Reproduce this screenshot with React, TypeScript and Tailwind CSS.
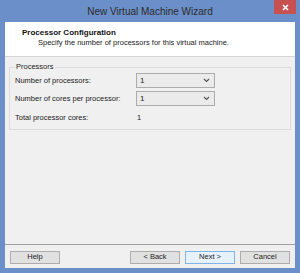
import React from "react";

const font = { fontFamily: '"Segoe UI", "Liberation Sans", Arial, sans-serif' };

function Combo({ value }: { value: string }) {
  return (
    <div className="w-[79px] h-[15px] flex items-center justify-between border border-[#acacac] bg-[#ebebeb] pl-[3px] pr-[4px]">
      <span className="text-[8px] text-[#222]">{value}</span>
      <svg width="7" height="5" viewBox="0 0 7 5">
        <path d="M1 1 L3.5 3.5 L6 1" stroke="#555" strokeWidth="1.2" fill="none" />
      </svg>
    </div>
  );
}

function Btn({ label, focused }: { label: string; focused?: boolean }) {
  return (
    <button
      className={
        "w-[50px] h-[13px] flex items-center justify-center text-[7.5px] text-[#222] border " +
        (focused ? "border-[#7eb4ea] bg-[#e5f1fb]" : "border-[#adadad] bg-[#e1e1e1]")
      }
    >
      {label}
    </button>
  );
}

export default function App() {
  return (
    <div style={font} className="w-[300px] h-[273px] bg-[#6b8fc8] flex flex-col px-[5px] pb-[5px]">
      <div className="relative h-[22px] flex items-center justify-center">
        <span className="text-[10px] text-[#2b2b2b]">New Virtual Machine Wizard</span>
        <div className="absolute right-[-1px] top-0 w-[22px] h-[14px] bg-[#c75050] flex items-center justify-center">
          <svg width="7" height="7" viewBox="0 0 7 7">
            <path d="M1 1 L6 6 M6 1 L1 6" stroke="#fff" strokeWidth="1.6" />
          </svg>
        </div>
      </div>
      <div className="flex-1 flex flex-col bg-[#f0f0f0]">
        <div className="h-[35px] bg-white border-b border-[#d5d5d5] pl-[17px] pt-[6px]">
          <div className="text-[8px] font-bold text-[#111] leading-[10px]">Processor Configuration</div>
          <div className="text-[7.5px] text-[#222] leading-[10px] pl-[16px]">
            Specify the number of processors for this virtual machine.
          </div>
        </div>
        <fieldset className="mx-[4px] mt-[5px] border border-[#dcdcdc] pl-[5px] h-[68px]">
          <legend className="text-[7.5px] text-[#222] px-[1px] leading-[10px]">Processors</legend>
          <div className="flex flex-col gap-[3px] pt-[1px]">
            <div className="flex items-center h-[15px]">
              <span className="w-[121px] text-[7.5px] text-[#222]">Number of processors:</span>
              <Combo value="1" />
            </div>
            <div className="flex items-center h-[15px]">
              <span className="w-[121px] text-[7.5px] text-[#222]">Number of cores per processor:</span>
              <Combo value="1" />
            </div>
            <div className="flex items-center h-[15px] mt-[1px]">
              <span className="w-[122px] text-[7.5px] text-[#222]">Total processor cores:</span>
              <span className="text-[7.5px] text-[#222]">1</span>
            </div>
          </div>
        </fieldset>
        <div className="flex-1" />
        <div className="border-t border-[#a0a0a0] h-[24px] flex items-center px-[5px] pt-[1px]">
          <Btn label="Help" />
          <div className="flex-1" />
          <div className="flex gap-[5px]">
            <Btn label="< Back" />
            <Btn label="Next >" focused />
            <Btn label="Cancel" />
          </div>
        </div>
      </div>
    </div>
  );
}
